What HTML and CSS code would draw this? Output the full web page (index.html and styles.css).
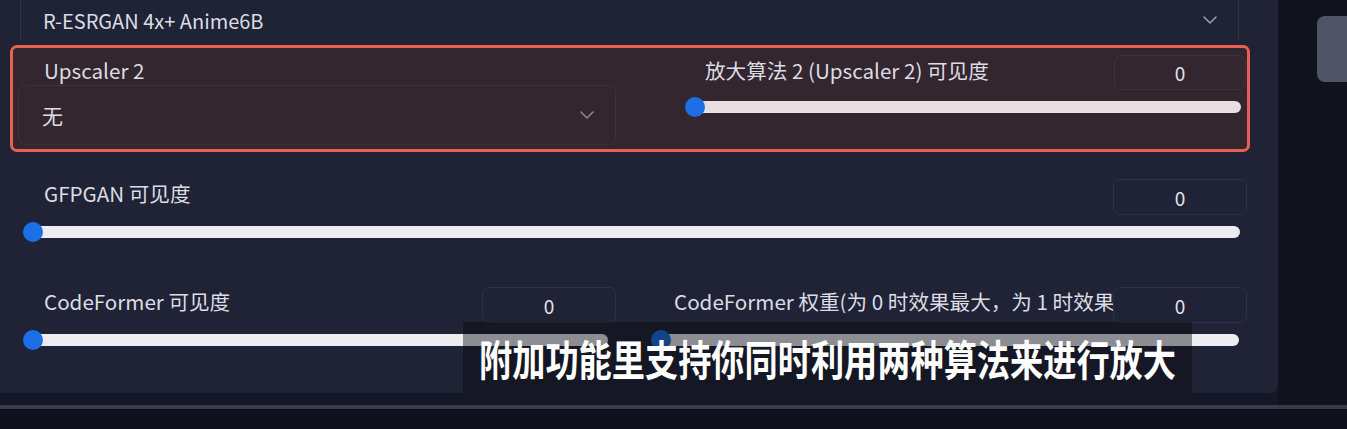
FILE: index.html
```html
<!DOCTYPE html>
<html lang="zh">
<head>
<meta charset="utf-8">
<title>Extras</title>
<link rel="stylesheet" href="styles.css">
</head>
<body>
<div class="screen">
  <div class="top-area">
    <div class="panel-wrap">
      <div class="panel">
        <div class="top-select">
          <span class="sel-text">R-ESRGAN 4x+ Anime6B</span>
          <svg class="chev" width="16" height="10" viewBox="0 0 16 10"><path d="M2 2 L8 8 L14 2" fill="none" stroke="#9a9cab" stroke-width="1.6" stroke-linecap="round" stroke-linejoin="round"/></svg>
        </div>

        <div class="highlight">
          <div class="hl-left">
            <div class="label">Upscaler 2</div>
            <div class="select">
              <span class="sel-text">无</span>
              <svg class="chev" width="16" height="10" viewBox="0 0 16 10"><path d="M2 2 L8 8 L14 2" fill="none" stroke="#8d8690" stroke-width="1.6" stroke-linecap="round" stroke-linejoin="round"/></svg>
            </div>
          </div>
          <div class="hl-right">
            <div class="head">
              <span class="label">放大算法 2 (Upscaler 2) 可见度</span>
              <div class="num num-hl">0</div>
            </div>
            <div class="slider slider-hl">
              <div class="track track-hl"></div>
              <div class="thumb"></div>
            </div>
          </div>
        </div>

        <div class="row row-gfp">
          <div class="head">
            <span class="label">GFPGAN 可见度</span>
            <div class="num">0</div>
          </div>
          <div class="slider">
            <div class="track"></div>
            <div class="thumb"></div>
          </div>
        </div>

        <div class="row row-two">
          <div class="col">
            <div class="head">
              <span class="label">CodeFormer 可见度</span>
              <div class="num">0</div>
            </div>
            <div class="slider">
              <div class="track"></div>
              <div class="thumb"></div>
            </div>
          </div>
          <div class="col col-right">
            <div class="head">
              <span class="label clip">CodeFormer 权重(为 0 时效果最大，为 1 时效果最小)</span>
              <div class="num">0</div>
            </div>
            <div class="slider">
              <div class="track"></div>
              <div class="thumb"></div>
            </div>
          </div>
        </div>

        <div class="subtitle"><span class="sub-text">附加功能里支持你同时利用两种算法来进行放大</span></div>
      </div>
    </div>
    <div class="side">
      <div class="side-btn"></div>
    </div>
  </div>
  <div class="bottom-line"></div>
  <div class="bottom"></div>
</div>
</body>
</html>
```

FILE: styles.css
```css
* { box-sizing: border-box; }
html, body { margin: 0; padding: 0; }
body {
  width: 1347px;
  height: 429px;
  overflow: hidden;
  background: #0e101b;
  font-family: "Noto Sans CJK SC", "Noto Sans", sans-serif;
  color: #dcdce3;
}
.screen { width: 1347px; height: 429px; display: flex; flex-direction: column; }
.top-area { display: flex; height: 405px; }
.panel-wrap { width: 1278px; background: #141725; }
.panel {
  position: relative;
  width: 1278px;
  height: 393px;
  background: #1f2335;
  border-bottom-right-radius: 8px;
  overflow: hidden;
}
.side {
  flex: 1;
  background: #10121d;
  padding-top: 16px;
  padding-left: 39px;
}
.side-btn {
  width: 40px;
  height: 66px;
  background: #4f5564;
  border-radius: 8px;
}
.bottom-line { height: 4px; background: #373b4b; }
.bottom { flex: 1; background: #0e101b; }

.top-select {
  margin-left: 20px;
  width: 1219px;
  height: 40px;
  border-left: 1px solid #2f3446;
  border-right: 1px solid #2f3446;
  background: #1f2336;
  display: flex;
  align-items: center;
  justify-content: space-between;
  padding: 0 20px 0 22px;
  font-size: 20px;
}
.chev { display: block; }

.highlight {
  margin-top: 5px;
  margin-left: 10px;
  width: 1240px;
  height: 107px;
  border: 3px solid #e8604f;
  border-radius: 7px;
  background: #34262f;
  display: grid;
  grid-template-columns: 603px 1fr;
}
.hl-left { padding-left: 5px; padding-top: 10px; }
.hl-left .label { padding-left: 26px; }
.select {
  margin-top: 3px;
  width: 598px;
  height: 60px;
  border: 1px solid rgba(255,255,255,0.05);
  border-radius: 7px;
  display: flex;
  align-items: center;
  justify-content: space-between;
  padding: 0 20px 0 23px;
  font-size: 21px;
}
.hl-right { padding-left: 69px; padding-top: 7px; padding-right: 1px; }
.hl-right .head .label { padding-left: 20px; margin-top: 3px; }

.label {
  font-size: 20.6px;
  line-height: 24px;
  white-space: nowrap;
}
.head {
  display: flex;
  justify-content: space-between;
  align-items: flex-start;
}
.head .label { margin-top: 2px; }
.clip { flex: 1; overflow: hidden; min-width: 0; }

.num {
  flex: none;
  width: 134px;
  height: 36px;
  border: 1px solid #2c3143;
  border-radius: 7px;
  display: flex;
  align-items: center;
  justify-content: center;
  font-size: 19px;
  color: #e2e2e8;
}
.num-hl {
  width: 132px;
  height: 35px;
  border-color: rgba(255,255,255,0.05);
}

.slider {
  position: relative;
  height: 20px;
  padding-top: 4px;
  margin-top: 7px;
}
.track {
  height: 12px;
  margin-left: 2px;
  margin-right: 7px;
  background: #ececf1;
  border-radius: 6px;
}
.track-hl { margin-left: 5px; margin-right: 5px; background: #e9dfe3; }
.thumb {
  position: absolute;
  left: 0;
  top: 0;
  width: 20px;
  height: 20px;
  border-radius: 50%;
  background: #1c6fe6;
}

.row { padding-left: 23px; padding-right: 31px; }
.row .head .label { padding-left: 21px; }
.row-gfp { padding-top: 27px; }
.row-two {
  padding-top: 45px;
  display: grid;
  grid-template-columns: 593px 592px;
  column-gap: 39px;
}
.row-two .col .track { margin-right: 8px; }
.col-right .head .label { padding-left: 19px; }
.col-right .slider { margin-left: -4px; }
.col-right .track { margin-left: 4px; margin-right: 7px; }

.subtitle {
  position: absolute;
  left: 463px;
  top: 322px;
  width: 729px;
  height: 71px;
  background: rgba(8, 9, 14, 0.42);
  display: flex;
  align-items: center;
  justify-content: center;
}
.sub-text {
  display: inline-block;
  font-size: 33.2px;
  font-weight: 700;
  color: #ffffff;
  line-height: 40px;
  transform: scaleY(1.25);
  white-space: nowrap;
}
```
